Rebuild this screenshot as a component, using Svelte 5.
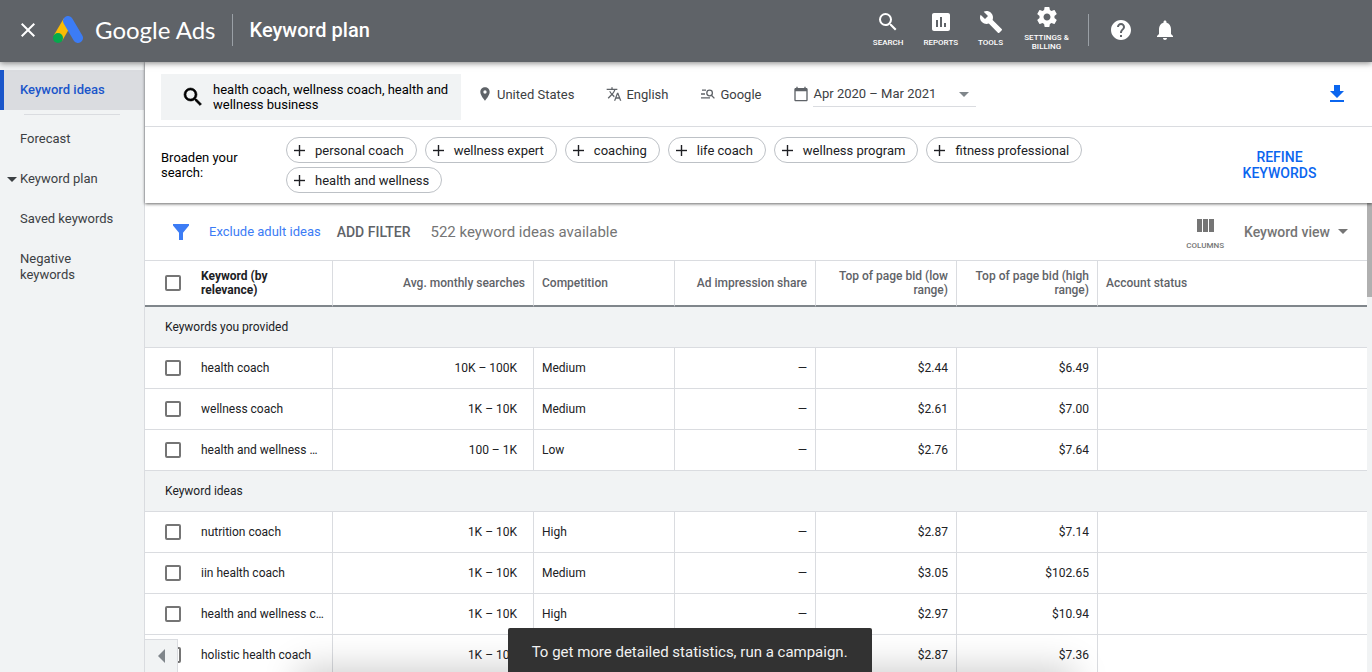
<script>
	let search = $state('health coach, wellness coach, health and wellness business');
	let range = $state('Apr 2020 – Mar 2021');
	let view = $state('Keyword view');

	const menu = ['Keyword ideas', 'Forecast', 'Keyword plan', 'Saved keywords', 'Negative keywords'];

	const tools = [
		{ name: 'Search', icon: 'M15.5 14h-.79l-.28-.27A6.47 6.47 0 0 0 16 9.5 6.5 6.5 0 1 0 9.5 16c1.61 0 3.09-.59 4.23-1.57l.27.28v.79l5 4.99L20.49 19l-4.99-5zm-6 0C7.01 14 5 11.99 5 9.5S7.01 5 9.5 5 14 7.01 14 9.5 11.99 14 9.5 14z' },
		{ name: 'Reports', icon: 'M19 3H5c-1.1 0-2 .9-2 2v14c0 1.1.9 2 2 2h14c1.1 0 2-.9 2-2V5c0-1.1-.9-2-2-2zM9 17H7v-7h2v7zm4 0h-2V7h2v10zm4 0h-2v-4h2v4z' },
		{ name: 'Tools', icon: 'M22.7 19l-9.1-9.1c.9-2.3.4-5-1.5-6.9-2-2-5-2.4-7.4-1.3L9 6 6 9 1.6 4.7C.4 7.1.9 10.1 2.9 12.1c1.9 1.9 4.6 2.4 6.9 1.5l9.1 9.1c.4.4 1 .4 1.4 0l2.3-2.3c.5-.4.5-1.1.1-1.4z' },
		{ name: 'Settings & Billing', icon: 'M19.43 12.98c.04-.32.07-.64.07-.98s-.03-.66-.07-.98l2.11-1.65c.19-.15.24-.42.12-.64l-2-3.46c-.12-.22-.39-.3-.61-.22l-2.49 1c-.52-.4-1.08-.73-1.69-.98l-.38-2.65A.488.488 0 0 0 14 2h-4c-.25 0-.46.18-.49.42l-.38 2.65c-.61.25-1.17.59-1.69.98l-2.49-1c-.23-.09-.49 0-.61.22l-2 3.46c-.13.22-.07.49.12.64l2.11 1.65c-.04.32-.07.65-.07.98s.03.66.07.98l-2.11 1.65c-.19.15-.24.42-.12.64l2 3.46c.12.22.39.3.61.22l2.49-1c.52.4 1.08.73 1.69.98l.38 2.65c.03.24.24.42.49.42h4c.25 0 .46-.18.49-.42l.38-2.65c.61-.25 1.17-.59 1.69-.98l2.49 1c.23.09.49 0 .61-.22l2-3.46c.12-.22.07-.49-.12-.64l-2.11-1.65zM12 15.5c-1.93 0-3.5-1.57-3.5-3.5s1.57-3.5 3.5-3.5 3.5 1.57 3.5 3.5-1.57 3.5-3.5 3.5z' }
	];

	const broaden = [
		'personal coach', 'wellness expert', 'coaching', 'life coach',
		'wellness program', 'fitness professional', 'health and wellness'
	];

	const groups = [
		{
			title: 'Keywords you provided',
			rows: [
				{ keyword: 'health coach', searches: '10K – 100K', competition: 'Medium', share: '—', low: '$2.44', high: '$6.49' },
				{ keyword: 'wellness coach', searches: '1K – 10K', competition: 'Medium', share: '—', low: '$2.61', high: '$7.00' },
				{ keyword: 'health and wellness …', searches: '100 – 1K', competition: 'Low', share: '—', low: '$2.76', high: '$7.64' }
			]
		},
		{
			title: 'Keyword ideas',
			rows: [
				{ keyword: 'nutrition coach', searches: '1K – 10K', competition: 'High', share: '—', low: '$2.87', high: '$7.14' },
				{ keyword: 'iin health coach', searches: '1K – 10K', competition: 'Medium', share: '—', low: '$3.05', high: '$102.65' },
				{ keyword: 'health and wellness c…', searches: '1K – 10K', competition: 'High', share: '—', low: '$2.97', high: '$10.94' },
				{ keyword: 'holistic health coach', searches: '1K – 10K', competition: '', share: '', low: '$2.87', high: '$7.36' }
			]
		}
	];
</script>

<div class="page">
	<header class="topbar">
		<button class="icon-btn close" aria-label="Close">
			<svg width="24" height="24" viewBox="0 0 24 24"><path d="M19 6.41L17.59 5 12 10.59 6.41 5 5 6.41 10.59 12 5 17.59 6.41 19 12 13.41 17.59 19 19 17.59 13.41 12z" /></svg>
		</button>
		<a class="brand" href="/">
			<svg width="30" height="28" viewBox="0 0 30 28">
				<path d="M10.7 2.5L.7 19.5L9.3 24.5L17.8 10z" fill="#fbbc04" />
				<path d="M15 5L25 22" stroke="#3c7cf5" stroke-width="10" stroke-linecap="round" />
				<circle cx="5" cy="22" r="5" fill="#06a94d" />
			</svg>
			<span>Google Ads</span>
		</a>
		<h1>Keyword plan</h1>
		<nav class="tools">
			{#each tools as tool}
				<button class="tool">
					<svg width="24" height="24" viewBox="0 0 24 24"><path d={tool.icon} /></svg>
					<span>{tool.name}</span>
				</button>
			{/each}
		</nav>
		<div class="account">
			<button class="icon-btn" aria-label="Help">
				<svg width="24" height="24" viewBox="0 0 24 24"><path d="M12 2C6.48 2 2 6.48 2 12s4.48 10 10 10 10-4.48 10-10S17.52 2 12 2zm1 17h-2v-2h2v2zm2.07-7.75l-.9.92C13.45 12.9 13 13.5 13 15h-2v-.5c0-1.1.45-2.1 1.17-2.83l1.24-1.26c.37-.36.59-.86.59-1.41 0-1.1-.9-2-2-2s-2 .9-2 2H8c0-2.21 1.79-4 4-4s4 1.79 4 4c0 .88-.36 1.68-.93 2.25z" /></svg>
			</button>
			<button class="icon-btn" aria-label="Notifications">
				<svg width="24" height="24" viewBox="0 0 24 24"><path d="M12 22c1.1 0 2-.9 2-2h-4c0 1.1.89 2 2 2zm6-6v-5c0-3.07-1.64-5.64-4.5-6.32V4c0-.83-.67-1.5-1.5-1.5s-1.5.67-1.5 1.5v.68C7.63 5.36 6 7.92 6 11v5l-2 2v1h16v-1l-2-2z" /></svg>
			</button>
		</div>
	</header>

	<div class="body">
		<nav class="sidebar">
			{#each menu as item, i}
				<a href="/" class:active={i === 0}>
					{#if item === 'Keyword plan'}
						<svg width="10" height="5" viewBox="0 0 10 5"><path d="M0 0h10L5 5z" /></svg>
					{/if}
					{item}
				</a>
				{#if i === 0}<hr />{/if}
			{/each}
		</nav>

		<main>
			<section class="panel">
				<div class="criteria">
					<label class="search-box">
						<svg width="24" height="24" viewBox="0 0 24 24"><path d={tools[0].icon} stroke="#000" stroke-width=".6" /></svg>
						<textarea rows="2" aria-label="Keywords" bind:value={search}></textarea>
					</label>
					<button class="setting place">
						<svg width="16" height="16" viewBox="0 0 24 24"><path d="M12 2C8.13 2 5 5.13 5 9c0 5.25 7 13 7 13s7-7.75 7-13c0-3.87-3.13-7-7-7zm0 9.5a2.5 2.5 0 0 1 0-5 2.5 2.5 0 0 1 0 5z" /></svg>
						United States
					</button>
					<button class="setting">
						<svg width="16" height="16" viewBox="0 0 24 24"><path d="M12.87 15.07l-2.54-2.51.03-.03A17.52 17.52 0 0 0 14.07 6H17V4h-7V2H8v2H1v1.99h11.17C11.5 7.92 10.44 9.75 9 11.35 8.07 10.32 7.3 9.19 6.69 8h-2c.73 1.63 1.73 3.17 2.98 4.56l-5.09 5.02L4 19l5-5 3.11 3.11.76-2.04zM18.5 10h-2L12 22h2l1.12-3h4.75L21 22h2l-4.5-12zm-2.62 7l1.62-4.33L19.12 17h-3.24z" /></svg>
						English
					</button>
					<button class="setting">
						<svg class="outline" width="16" height="16" viewBox="0 0 16 16"><path d="M2 4.2h4M1 8h4M1 11.8h9" /><circle cx="9.6" cy="7" r="2.8" /><path d="M11.4 9.2l3 3.2" /></svg>
						Google
					</button>
					<label class="dates">
						<svg width="16" height="16" viewBox="0 0 24 24"><path d="M20 3h-1V1h-2v2H7V1H5v2H4c-1.1 0-2 .9-2 2v16c0 1.1.9 2 2 2h16c1.1 0 2-.9 2-2V5c0-1.1-.9-2-2-2zm0 18H4V8h16v13z" /></svg>
						<select aria-label="Date range" bind:value={range}>
							<option>Apr 2020 – Mar 2021</option>
						</select>
						<svg class="caret" width="10" height="5" viewBox="0 0 10 5"><path d="M0 0h10L5 5z" /></svg>
					</label>
					<button class="icon-btn download" aria-label="Download">
						<svg width="24" height="24" viewBox="0 0 24 24"><path d="M19 9h-4V3H9v6H5l7 7 7-7zM5 18v2h14v-2H5z" /></svg>
					</button>
				</div>
				<div class="broaden">
					<span class="broaden-label">Broaden your search:</span>
					<div class="chips">
						{#each broaden as idea}
							<button class="chip">
								<svg width="11" height="11" viewBox="0 0 11 11"><path d="M5 0h1v5h5v1H6v5H5V6H0V5h5z" stroke="#202124" stroke-width=".4" /></svg>
								{idea}
							</button>
						{/each}
					</div>
					<button class="refine">REFINE KEYWORDS</button>
				</div>
			</section>

			<section class="results">
				<div class="sheet">
					<div class="filters">
						<svg class="funnel" width="16" height="16" viewBox="0 0 16 16"><path d="M0 0h16v1.6L10 8.8V16H6V8.8L0 1.6z" /></svg>
						<a href="/">Exclude adult ideas</a>
						<button class="add-filter">ADD FILTER</button>
						<span class="count">522 keyword ideas available</span>
						<button class="columns">
							<svg width="17" height="13" viewBox="0 0 17 13"><path d="M0 0h5v13H0zM6 0h5v13H6zM12 0h5v13h-5z" /></svg>
							<span>COLUMNS</span>
						</button>
						<label class="view">
							<select aria-label="View" bind:value={view}>
								<option>Keyword view</option>
							</select>
							<svg class="caret" width="10" height="5" viewBox="0 0 10 5"><path d="M0 0h10L5 5z" /></svg>
						</label>
					</div>
					<table>
						<colgroup>
							<col class="c-check" /><col class="c-keyword" /><col class="c-searches" />
							<col class="c-data" /><col class="c-data" /><col class="c-data" /><col class="c-data" /><col />
						</colgroup>
						<thead>
							<tr>
								<th class="check"><input type="checkbox" aria-label="Select all" /></th>
								<th class="name line">Keyword (by relevance)</th>
								<th class="num line">Avg. monthly searches</th>
								<th class="line">Competition</th>
								<th class="num line">Ad impression share</th>
								<th class="num line">Top of page bid (low range)</th>
								<th class="num line">Top of page bid (high range)</th>
								<th>Account status</th>
							</tr>
						</thead>
						<tbody>
							{#each groups as group}
								<tr class="group"><td colspan="8">{group.title}</td></tr>
								{#each group.rows as row}
									<tr>
										<td class="check"><input type="checkbox" aria-label={row.keyword} /></td>
										<td class="name line">{row.keyword}</td>
										<td class="num searches line">{row.searches}</td>
										<td class="line">{row.competition}</td>
										<td class="num line">{row.share}</td>
										<td class="num line">{row.low}</td>
										<td class="num line">{row.high}</td>
										<td></td>
									</tr>
								{/each}
							{/each}
						</tbody>
					</table>
				</div>
				<div class="scrollbar"><div class="thumb"></div></div>
				<button class="collapse" aria-label="Collapse menu">
					<svg width="7" height="14" viewBox="0 0 7 14"><path d="M7 0v14L0 7z" /></svg>
				</button>
			</section>
		</main>
	</div>

	<div class="glow"></div>
	<div class="snackbar" role="status">To get more detailed statistics, run a campaign.</div>
</div>

<style>
	:global(body) {
		font-family: Roboto, "Liberation Sans", sans-serif;
		font-size: 13px;
		line-height: 15px;
		color: #202124;
	}

	.page, .page * {
		box-sizing: border-box;
	}

	.page {
		position: relative;
		display: flex;
		flex-direction: column;
		height: 100vh;
		overflow: hidden;
		background: #fff;
	}

	button, select, textarea {
		margin: 0;
		padding: 0;
		border: 0;
		background: none;
		font: inherit;
		color: inherit;
	}

	svg {
		display: block;
		flex: none;
		fill: currentColor;
	}

	a {
		color: inherit;
		text-decoration: none;
	}

	/* top bar */
	.topbar {
		position: relative;
		z-index: 3;
		display: flex;
		flex: none;
		align-items: center;
		height: 62px;
		padding: 0 195px 2px 16px;
		background: #5f6368;
		color: #fff;
		box-shadow: 0 1px 6px rgba(0, 0, 0, .5);
	}

	.brand {
		display: flex;
		align-items: center;
		gap: 12px;
		height: 32px;
		margin-left: 13px;
		padding-right: 16px;
		border-right: 1px solid #9aa0a6;
		font: 24px/32px Lato, sans-serif;
	}

	h1 {
		margin: 0 auto 0 17px;
		font-size: 20px;
		line-height: 24px;
		font-weight: 500;
	}

	.tools {
		display: flex;
		align-items: center;
		gap: 20px;
		margin: 0 18px 4px 0;
	}

	.tool {
		display: flex;
		flex-direction: column;
		align-items: center;
		gap: 4px;
		max-width: 47px;
		font-size: 8px;
		line-height: 9px;
		font-weight: 500;
		text-transform: uppercase;
	}

	.account {
		display: flex;
		align-items: center;
		gap: 20px;
		height: 32px;
		padding-left: 20px;
		border-left: 1px solid #9aa0a6;
	}

	/* side menu */
	.body {
		display: flex;
		flex: 1;
		min-height: 0;
	}

	.sidebar {
		flex: none;
		width: 145px;
		padding-top: 8px;
		border-right: 1px solid #dadce0;
		background: #f1f3f4;
		color: #3c4043;
	}

	.sidebar a {
		position: relative;
		display: block;
		padding: 12px 48px 12px 20px;
		line-height: 16px;
		white-space: nowrap;
	}

	.sidebar a:last-child {
		white-space: normal;
	}

	.sidebar .active {
		padding-left: 16px;
		border-left: 4px solid #1a56ca;
		background: #dadce0;
		color: #1a56ca;
		font-weight: 500;
	}

	.sidebar svg {
		position: absolute;
		top: 18px;
		left: 7px;
	}

	.sidebar hr {
		height: 1px;
		margin: 4px 24px;
		border: 0;
		background: #dadce0;
	}

	main {
		display: flex;
		flex: 1;
		flex-direction: column;
		min-width: 0;
	}

	/* search settings */
	.panel {
		position: relative;
		z-index: 2;
		flex: none;
		background: #fff;
		box-shadow: 0 1px 3px rgba(0, 0, 0, .6);
	}

	.criteria {
		display: flex;
		align-items: center;
		height: 65px;
		padding: 0 23px 0 16px;
		border-bottom: 1px solid #dadce0;
		color: #3c4043;
	}

	.search-box {
		display: flex;
		align-items: center;
		gap: 8px;
		width: 300px;
		height: 46px;
		margin-top: 6px;
		padding-left: 20px;
		background: #f1f3f4;
		color: #000;
	}

	.search-box textarea {
		flex: 1;
		height: 30px;
		resize: none;
		overflow: hidden;
		outline: 0;
	}

	.setting, .dates {
		display: flex;
		align-items: center;
		gap: 4px;
		margin-left: 32px;
	}

	.place {
		margin-left: 16px;
	}

	.setting svg, .dates svg {
		color: #5f6368;
	}

	.outline {
		fill: none;
		stroke: currentColor;
		stroke-width: 1.3;
	}

	.dates select {
		width: 163px;
		height: 26px;
		border-bottom: 1px solid #dadce0;
	}

	select {
		appearance: none;
		outline: 0;
	}

	.dates .caret {
		margin-left: -21px;
		color: #80868b;
		pointer-events: none;
	}

	.download {
		margin-left: auto;
		color: #0b66ef;
	}

	.broaden {
		display: flex;
		align-items: center;
		min-height: 76px;
		padding: 10px 55px 10px 16px;
	}

	.broaden-label {
		flex: none;
		width: 125px;
		padding-right: 40px;
		color: #000;
	}

	.chips {
		display: flex;
		flex: 1;
		flex-wrap: wrap;
		gap: 4px 8px;
	}

	.chip {
		display: flex;
		align-items: center;
		gap: 10px;
		height: 26px;
		padding: 0 12px 0 7px;
		border: 1px solid #bdc1c6;
		border-radius: 13px;
	}

	.refine {
		flex: none;
		width: 75px;
		color: #0b66ef;
		font-size: 14px;
		line-height: 16px;
		font-weight: 500;
	}

	/* results */
	.results {
		position: relative;
		display: flex;
		flex: 1;
		min-height: 0;
	}

	.sheet {
		flex: 1;
		min-width: 0;
		overflow: hidden;
	}

	.filters {
		display: flex;
		align-items: center;
		height: 58px;
		padding: 0 19px 0 28px;
		border-bottom: 1px solid #dadce0;
		color: #5f6368;
	}

	.funnel, .filters a {
		color: #3c7cf5;
	}

	.filters a {
		margin-left: 20px;
	}

	.add-filter {
		margin-left: 16px;
		font-size: 14px;
		line-height: 16px;
		font-weight: 500;
	}

	.count {
		margin: 0 auto 0 20px;
		color: #757575;
		font-size: 15px;
		line-height: 18px;
	}

	.columns {
		display: flex;
		flex-direction: column;
		align-items: center;
		gap: 9px;
		margin-top: 5px;
		color: #757575;
		font-size: 8px;
		line-height: 9px;
		font-weight: 500;
	}

	.view {
		display: flex;
		align-items: center;
		gap: 8px;
		margin-left: 20px;
		color: #757575;
		font-size: 14px;
		line-height: 16px;
		font-weight: 500;
	}

	table {
		width: 100%;
		table-layout: fixed;
		border-spacing: 0;
		font-size: 12px;
		line-height: 14px;
	}

	.c-check { width: 56px; }
	.c-keyword { width: 132px; }
	.c-searches { width: 201px; }
	.c-data { width: 141px; }

	th, td {
		height: 41px;
		padding: 0 8px;
		border-bottom: 1px solid #dadce0;
		text-align: left;
	}

	th {
		height: 46px;
		border-bottom: 2px solid #80868b;
		color: #5f6368;
		font-weight: 500;
	}

	.line {
		border-right: 1px solid #dadce0;
	}

	.num {
		text-align: right;
	}

	.searches {
		padding-right: 16px;
	}

	th.searches {
		padding-right: 8px;
	}

	.name {
		padding: 0;
	}

	td.name {
		white-space: nowrap;
	}

	th.name {
		padding-right: 40px;
		color: #202124;
		font-weight: 700;
	}

	.group td {
		padding-left: 20px;
		background: #f1f3f4;
	}

	.check {
		padding: 0 0 0 20px;
	}

	input[type='checkbox'] {
		display: block;
		appearance: none;
		width: 16px;
		height: 16px;
		margin: 0;
		border: 2px solid #757575;
		border-radius: 2px;
		background: #fff;
	}

	.scrollbar {
		flex: none;
		width: 5px;
		background: #f1f3f4;
	}

	.thumb {
		height: 20%;
		background: #b0b0b0;
	}

	.collapse {
		position: absolute;
		bottom: 0;
		left: 0;
		z-index: 1;
		display: flex;
		align-items: center;
		justify-content: center;
		width: 33px;
		height: 33px;
		border: 1px solid #dadce0;
		border-width: 1px 1px 0 0;
		background: #f1f3f4;
		color: #80868b;
	}

	/* message at the bottom edge */
	.glow {
		position: absolute;
		right: 22%;
		bottom: -40px;
		left: 22%;
		height: 40px;
		box-shadow: 0 0 36px 4px rgba(0, 0, 0, .2);
		pointer-events: none;
	}

	.snackbar {
		position: absolute;
		bottom: 0;
		left: 37%;
		z-index: 4;
		padding: 12px 24px 8px;
		border-radius: 2px 2px 0 0;
		background: #323232;
		color: #f1f1f1;
		font-size: 15px;
		line-height: 24px;
		white-space: nowrap;
	}
</style>
